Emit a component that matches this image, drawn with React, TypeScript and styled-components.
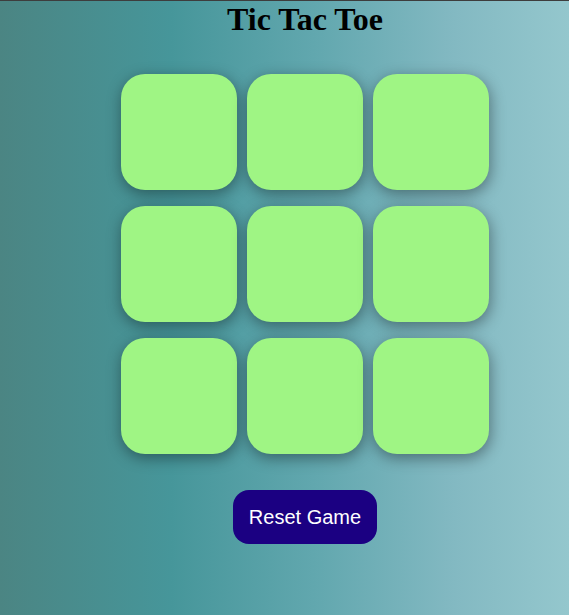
import React from "react";
import styled, { createGlobalStyle } from "styled-components";

const Global = createGlobalStyle`
  html, body {
    margin: 0;
    padding: 0;
    min-height: 100%;
  }
  body {
    min-height: 615px;
    background: linear-gradient(to right, #4b8583 0%, #46969a 30%, #61a7ae 55%, #83b9c2 80%, #94c7cd 100%);
    border-top: 1px solid #3d3d3d;
    box-sizing: border-box;
    font-family: "Liberation Serif", "Times New Roman", serif;
  }
`;

const Page = styled.main`
  display: flex;
  flex-direction: column;
  align-items: center;
  padding-left: 41px;
`;

const Title = styled.h1`
  margin: 0;
  font-family: "Liberation Serif", "Times New Roman", serif;
  font-size: 32px;
  font-weight: bold;
  color: #000;
  line-height: 36px;
`;

const Board = styled.div`
  display: grid;
  grid-template-columns: repeat(3, 116px);
  grid-auto-rows: 116px;
  column-gap: 10px;
  row-gap: 16px;
  margin-top: 37px;
`;

const Cell = styled.button`
  border: none;
  padding: 0;
  background: #9ff584;
  border-radius: 24px;
  box-shadow: 1px 4px 15px rgba(0, 0, 0, 0.4);
  cursor: pointer;
  font-family: "Liberation Sans", Arial, sans-serif;
  font-size: 48px;
`;

const ResetButton = styled.button`
  margin-top: 36px;
  border: none;
  background: #1b0082;
  color: #fff;
  font-family: "Liberation Sans", Arial, sans-serif;
  font-size: 20px;
  line-height: 24px;
  padding: 15px 16px;
  border-radius: 16px;
  cursor: pointer;
`;

export default function App() {
  const [cells, setCells] = React.useState<string[]>(Array(9).fill(""));
  const [turn, setTurn] = React.useState<"X" | "O">("X");

  const play = (i: number) => {
    if (cells[i]) return;
    const next = cells.slice();
    next[i] = turn;
    setCells(next);
    setTurn(turn === "X" ? "O" : "X");
  };

  return (
    <>
      <Global />
      <Page>
        <Title>Tic Tac Toe</Title>
        <Board>
          {cells.map((c, i) => (
            <Cell key={i} onClick={() => play(i)}>
              {c}
            </Cell>
          ))}
        </Board>
        <ResetButton
          onClick={() => {
            setCells(Array(9).fill(""));
            setTurn("X");
          }}
        >
          Reset Game
        </ResetButton>
      </Page>
    </>
  );
}
